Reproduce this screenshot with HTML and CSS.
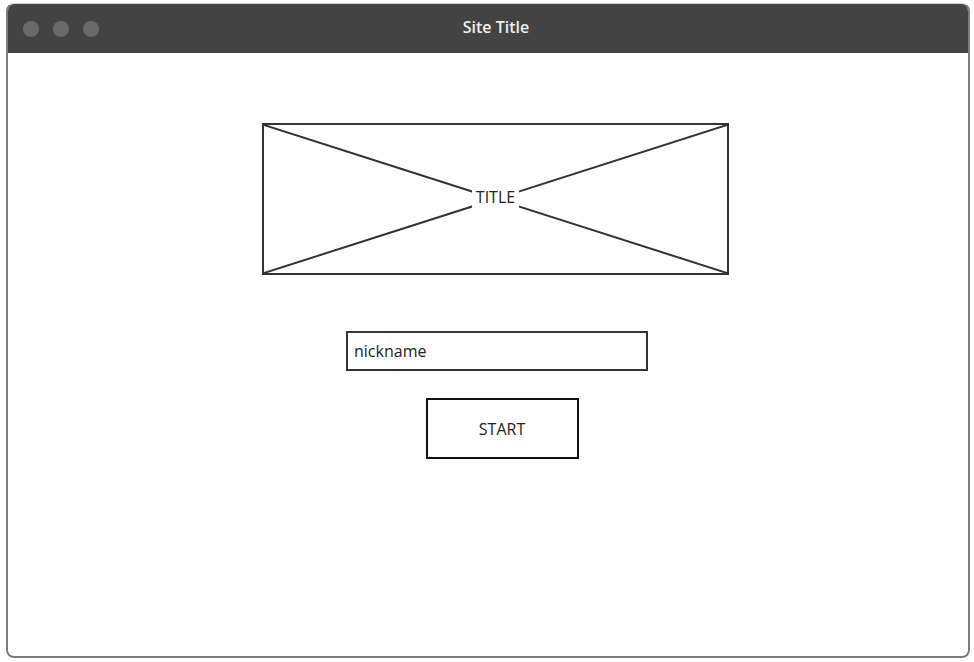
FILE: index.html
```html
<!DOCTYPE html>
<html>
<head>
<meta charset="utf-8">
<link rel="stylesheet" href="styles.css">
</head>
<body>
<div class="window">
  <div class="titlebar">
    <div class="dots"><span class="dot"></span><span class="dot"></span><span class="dot"></span></div>
    <div class="site-title">Site Title</div>
  </div>
  <div class="content">
    <div class="placeholder">
      <svg class="cross" width="463" height="148" viewBox="0 0 463 148" preserveAspectRatio="none">
        <line x1="0" y1="0" x2="463" y2="148" stroke="#333" stroke-width="2"/>
        <line x1="463" y1="0" x2="0" y2="148" stroke="#333" stroke-width="2"/>
      </svg>
      <span class="placeholder-label">TITLE</span>
    </div>
    <div class="nickname">nickname</div>
    <div class="start">START</div>
  </div>
</div>
</body>
</html>
```
FILE: styles.css
```css
html, body {
  margin: 0;
  padding: 0;
  background: #ffffff;
}
body {
  font-family: "Open Sans", "Noto Sans", sans-serif;
  padding: 3px 4px 4px 6px;
}
.window {
  width: 964px;
  height: 655px;
  box-sizing: border-box;
  border: 2px solid #7c7c7c;
  border-top: 1px solid #cfcfcf;
  border-radius: 8px;
  overflow: hidden;
  display: flex;
  flex-direction: column;
}
.titlebar {
  height: 49px;
  background: #434343;
  display: flex;
  align-items: center;
  position: relative;
}
.dots {
  display: flex;
  gap: 14px;
  padding-left: 15px;
}
.dot {
  width: 16px;
  height: 16px;
  border-radius: 50%;
  background: #6a6a6a;
}
.site-title {
  position: absolute;
  left: 0;
  right: 0;
  text-align: center;
  color: #f0f0f0;
  font-size: 16px;
  font-weight: 600;
  top: 12px;
  padding-left: 16px;
}
.content {
  flex: 1;
  display: flex;
  flex-direction: column;
  align-items: center;
  padding-top: 70px;
  padding-left: 15px;
}
.placeholder {
  width: 467px;
  height: 152px;
  box-sizing: border-box;
  border: 2px solid #333;
  position: relative;
  display: flex;
  align-items: center;
  justify-content: center;
}
.cross {
  position: absolute;
  left: 0;
  top: 0;
  width: 100%;
  height: 100%;
}
.placeholder-label {
  position: relative;
  background: #fff;
  padding: 2px 4px;
  font-size: 16px;
  color: #222;
  top: -2px;
}
.nickname {
  margin-top: 56px;
  margin-left: 3px;
  width: 302px;
  height: 40px;
  box-sizing: border-box;
  border: 2px solid #333;
  padding-left: 6px;
  display: flex;
  align-items: center;
  font-size: 16px;
  color: #222;
}
.start {
  margin-top: 27px;
  margin-left: 13px;
  width: 153px;
  height: 61px;
  box-sizing: border-box;
  border: 2px solid #111;
  display: flex;
  align-items: center;
  justify-content: center;
  font-size: 16px;
  color: #222;
}
```
